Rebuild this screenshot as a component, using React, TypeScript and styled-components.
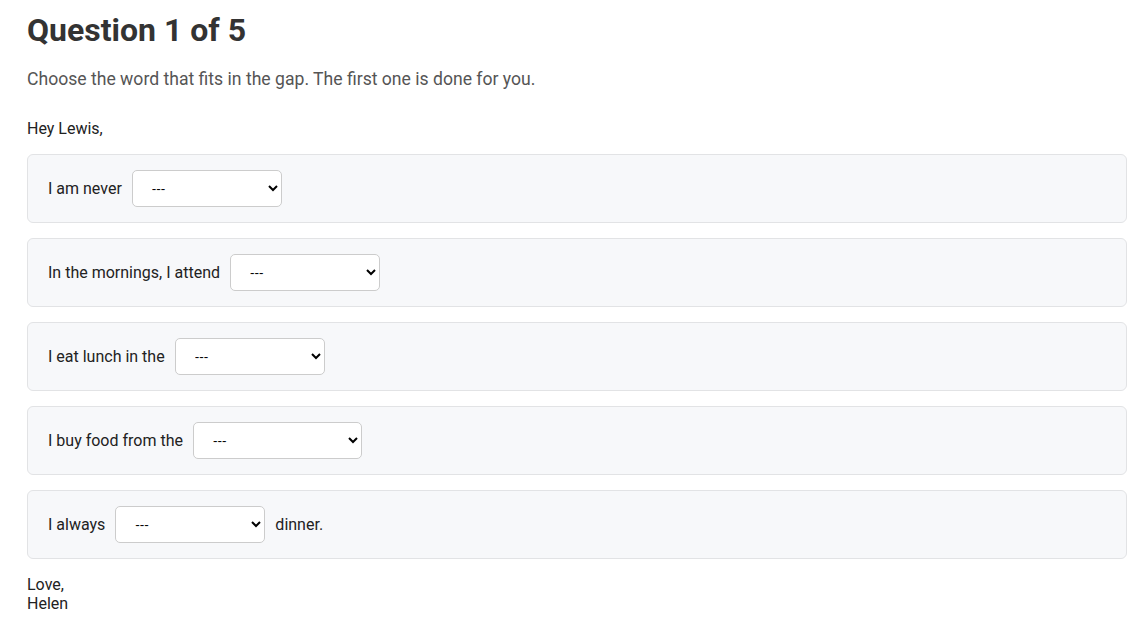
import React from "react";
import styled, { createGlobalStyle } from "styled-components";

const Global = createGlobalStyle`
  html, body { margin: 0; padding: 0; background: #fff; }
  body { font-family: Roboto, "Noto Sans", sans-serif; color: #333; }
`;

const Page = styled.div`
  width: 1100px;
  padding: 10px 0 0 27px;
`;

const Title = styled.h1`
  margin: 0;
  font-size: 32px;
  line-height: 40px;
  font-weight: 700;
  color: #333;
`;

const Instructions = styled.p`
  margin: 17px 0 0;
  font-size: 17.6px;
  line-height: 24px;
  color: #555;
`;

const Letter = styled.div`
  margin-top: 28px;
  font-size: 16px;
  line-height: 19px;
  color: #222;
`;

const Greeting = styled.p`
  margin: 0 0 16px;
`;

const List = styled.div`
  display: flex;
  flex-direction: column;
  gap: 15px;
`;

const Row = styled.div`
  display: flex;
  align-items: center;
  gap: 10px;
  height: 69px;
  box-sizing: border-box;
  padding: 0 20px;
  background: #f7f8fa;
  border: 1px solid #e2e3e5;
  border-radius: 6px;
`;

const Select = styled.select<{ $w?: number }>`
  width: ${(p) => p.$w ?? 150}px;
  height: 37px;
  box-sizing: border-box;
  padding: 0 6px 0 15px;
  border: 1px solid #ccc;
  border-radius: 5px;
  background: #fff;
  font-family: "Liberation Sans", Arial, sans-serif;
  font-size: 13.5px;
  color: #000;
`;

const SignOff = styled.p`
  margin: 16px 0 0;
`;

const rows: { before: string; after?: string; w?: number }[] = [
  { before: "I am never" },
  { before: "In the mornings, I attend" },
  { before: "I eat lunch in the" },
  { before: "I buy food from the", w: 169 },
  { before: "I always", after: "dinner." },
];

export default function App() {
  return (
    <>
      <Global />
      <Page>
        <Title>Question 1 of 5</Title>
        <Instructions>Choose the word that fits in the gap. The first one is done for you.</Instructions>
        <Letter>
          <Greeting>Hey Lewis,</Greeting>
          <List>
            {rows.map((r, i) => (
              <Row key={i}>
                <span>{r.before}</span>
                <Select $w={r.w} defaultValue="">
                  <option value="">---</option>
                </Select>
                {r.after && <span>{r.after}</span>}
              </Row>
            ))}
          </List>
          <SignOff>
            Love,
            <br />
            Helen
          </SignOff>
        </Letter>
      </Page>
    </>
  );
}
